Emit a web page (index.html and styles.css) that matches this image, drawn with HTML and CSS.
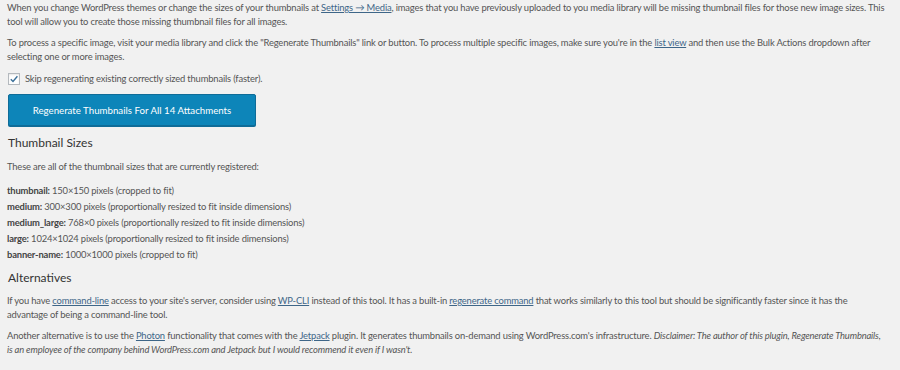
FILE: index.html
```html
<!DOCTYPE html>
<html>
<head>
<meta charset="utf-8">
<link rel="stylesheet" href="styles.css">
</head>
<body>
<div class="wrap">
  <p class="para">When you change WordPress themes or change the sizes of your thumbnails at <a href="#">Settings → Media</a>, images that you have previously uploaded to you media library will be missing thumbnail files for those new image sizes. This<br>tool will allow you to create those missing thumbnail files for all images.</p>
  <p class="para">To process a specific image, visit your media library and click the "Regenerate Thumbnails" link or button. To process multiple specific images, make sure you're in the <a href="#">list view</a> and then use the Bulk Actions dropdown after<br>selecting one or more images.</p>
  <label class="check">
    <span class="box"><svg width="10" height="10" viewBox="0 0 10 10"><path d="M1.8 5.2 L4 7.4 L8.4 2.2" fill="none" stroke="#3a6f98" stroke-width="1.4"/></svg></span>
    <span>Skip regenerating existing correctly sized thumbnails (faster).</span>
  </label>
  <div class="btnrow"><button class="hero">Regenerate Thumbnails For All 14 Attachments</button></div>
  <h2 class="heading">Thumbnail Sizes</h2>
  <p class="para lead">These are all of the thumbnail sizes that are currently registered:</p>
  <ul class="sizes">
    <li><strong>thumbnail:</strong> 150×150 pixels (cropped to fit)</li>
    <li><strong>medium:</strong> 300×300 pixels (proportionally resized to fit inside dimensions)</li>
    <li><strong>medium_large:</strong> 768×0 pixels (proportionally resized to fit inside dimensions)</li>
    <li><strong>large:</strong> 1024×1024 pixels (proportionally resized to fit inside dimensions)</li>
    <li><strong>banner-name:</strong> 1000×1000 pixels (cropped to fit)</li>
  </ul>
  <h2 class="heading alt">Alternatives</h2>
  <p class="para after">If you have <a href="#">command-line</a> access to your site's server, consider using <a href="#">WP-CLI</a> instead of this tool. It has a built-in <a href="#">regenerate command</a> that works similarly to this tool but should be significantly faster since it has the<br>advantage of being a command-line tool.</p>
  <p class="para after">Another alternative is to use the <a href="#">Photon</a> functionality that comes with the <a href="#">Jetpack</a> plugin. It generates thumbnails on-demand using WordPress.com's infrastructure. <em>Disclaimer: The author of this plugin, Regenerate Thumbnails,<br>is an employee of the company behind WordPress.com and Jetpack but I would recommend it even if I wasn't.</em></p>
</div>
</body>
</html>
```

FILE: styles.css
```css
html, body {
  margin: 0;
  background: #f1f1f1;
}
.wrap {
  padding: 1px 8px 0 7px;
  font-family: Lato, "Open Sans", sans-serif;
  font-size: 9.4px;
  letter-spacing: -0.16px;
  color: #555;
  white-space: nowrap;
}
.para {
  margin: 0 0 7px 0;
  line-height: 14px;
}
.para a {
  color: #3e6688;
  text-decoration: underline;
}
.check {
  display: flex;
  align-items: center;
  gap: 5px;
  margin-top: 8px;
  height: 14px;
  line-height: 14px;
  padding-left: 1px;
}
.box {
  width: 10px;
  height: 10px;
  border: 1px solid #b4b9be;
  background: #fff;
  box-shadow: inset 0 1px 2px rgba(0,0,0,0.1);
  display: flex;
}
.btnrow {
  margin-top: 8px;
  padding-left: 1px;
}
.hero {
  width: 248px;
  height: 32px;
  background: #0d85b9;
  border: 1px solid #0f6c98;
  border-radius: 2px;
  box-shadow: 0 1px 0 #0f6c98;
  color: #fff;
  font-family: Lato, "Open Sans", sans-serif;
  font-size: 9.7px;
  padding: 0;
  display: block;
}
.heading {
  margin: 8px 0 0 1px;
  font-size: 12px;
  font-weight: 400;
  line-height: 18px;
  color: #333;
  letter-spacing: 0;
}
.lead {
  margin-top: 8px;
}
.sizes {
  list-style: none;
  margin: 9px 0 0 0;
  padding: 0;
  line-height: 16px;
}
.sizes strong {
  font-weight: 700;
  color: #444;
}
.alt {
  margin-top: 6px;
}
.after {
  margin-top: 7px;
}
```
